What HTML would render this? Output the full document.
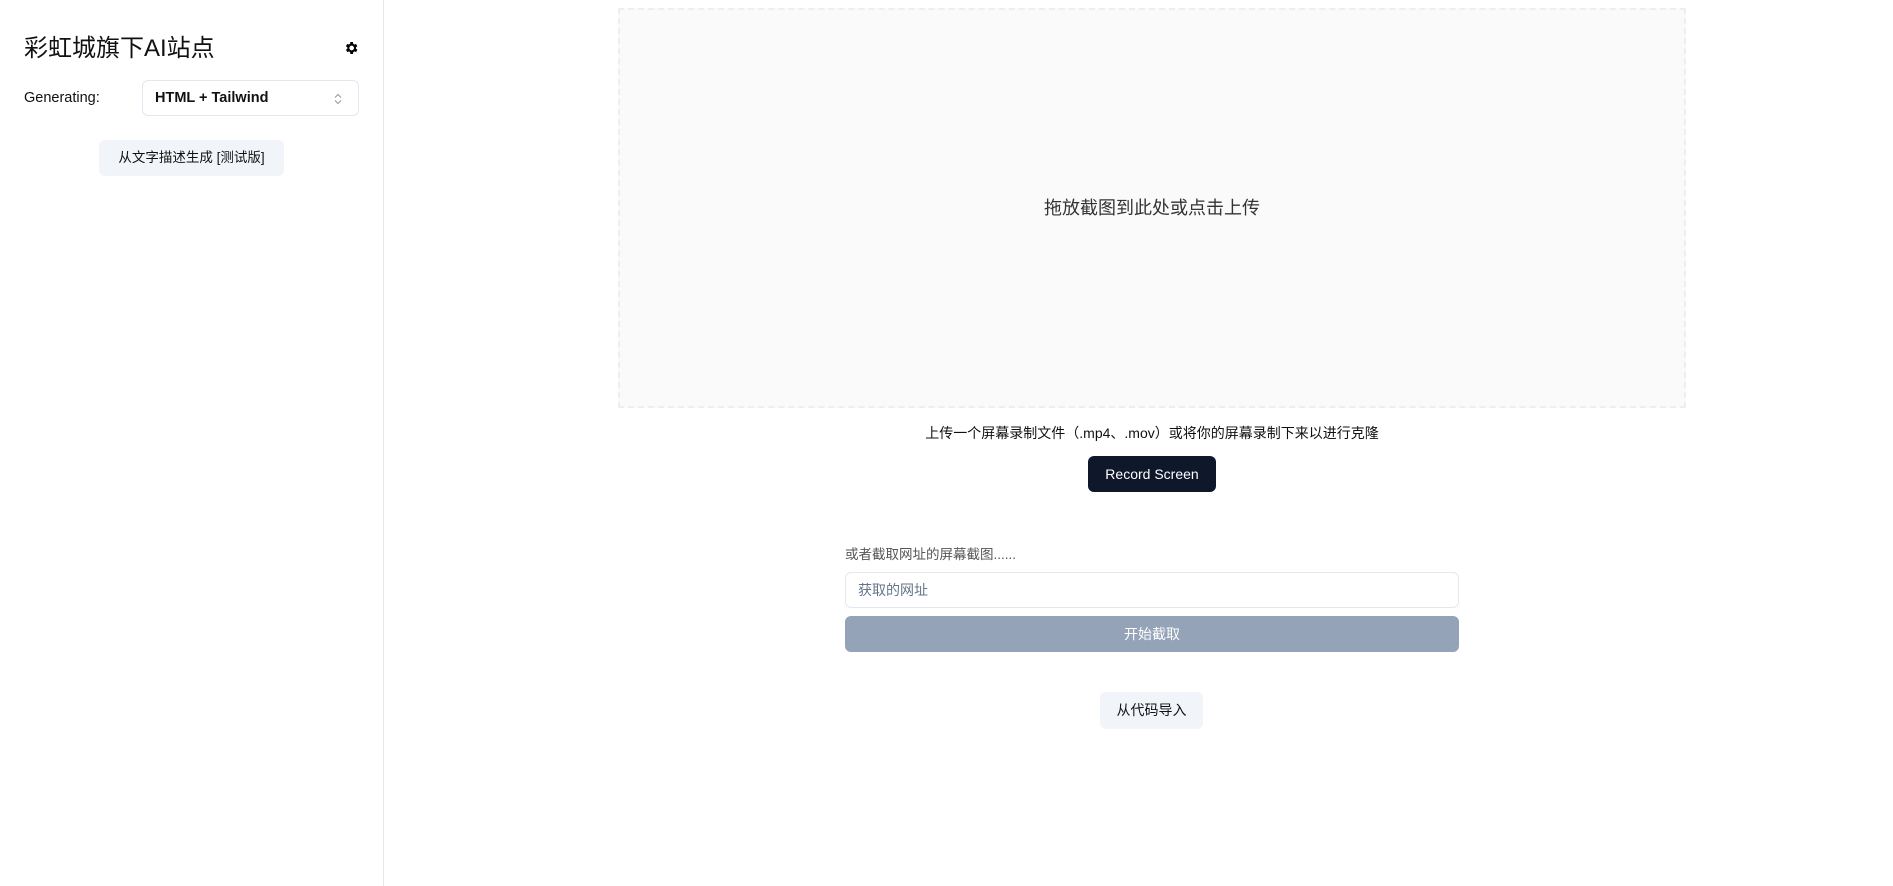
<!DOCTYPE html>
<html><head><meta charset="utf-8"><style>
*{box-sizing:border-box;margin:0;padding:0}
body{width:1893px;height:886px;background:#fff;font-family:"Liberation Sans","Noto Sans CJK SC",sans-serif;color:#111;position:relative;overflow:hidden}
.side{position:absolute;left:0;top:0;width:384px;height:886px;border-right:1px solid #e5e7eb}
.abs{position:absolute}
</style></head><body>
<div class="side">
  <div class="abs" style="left:24px;top:32px;font-size:24px;line-height:34px;color:#111">彩虹城旗下AI站点</div>
  <svg class="abs" style="left:343px;top:40px" width="16" height="16" viewBox="0 0 24 24"><path fill="#000" d="M19.4 13a7.5 7.5 0 0 0 0-2l2.1-1.6-2-3.5-2.5 1a7.6 7.6 0 0 0-1.7-1L15 3h-4l-.4 2.9a7.6 7.6 0 0 0-1.7 1l-2.5-1-2 3.5L6.6 11a7.5 7.5 0 0 0 0 2l-2.1 1.6 2 3.5 2.5-1a7.6 7.6 0 0 0 1.7 1L11 21h4l.4-2.9a7.6 7.6 0 0 0 1.7-1l2.5 1 2-3.5zM13 15.5a3.5 3.5 0 1 1 0-7 3.5 3.5 0 0 1 0 7z"/></svg>
  <div class="abs" style="left:24px;top:89px;font-size:14.5px;line-height:18px">Generating:</div>
  <div class="abs" style="left:142px;top:80px;width:217px;height:36px;border:1px solid #e2e8f0;border-radius:6px;font-size:14.5px;font-weight:bold;padding-left:12px;line-height:34px">HTML + Tailwind
    <svg class="abs" style="right:16px;top:12px" width="8" height="12" viewBox="0 0 8 12"><path d="M1 4.5L4 1.5 7 4.5M1 7.5L4 10.5 7 7.5" stroke="#999" fill="none" stroke-width="1"/></svg>
  </div>
  <div class="abs" style="left:99px;top:140px;width:185px;height:36px;background:#f1f5f9;border-radius:6px;font-size:13.5px;line-height:36px;text-align:center;color:#111">从文字描述生成 [测试版]</div>
</div>
<div class="abs" style="left:618px;top:8px;width:1068px;height:400px;background:#fafafa;border:2px dashed #eee;display:flex;align-items:center;justify-content:center;font-size:18px;color:#333;padding-bottom:2px">拖放截图到此处或点击上传</div>
<div class="abs" style="left:618px;top:424px;width:1068px;text-align:center;font-size:14px;line-height:18px;color:#111">上传一个屏幕录制文件（.mp4、.mov）或将你的屏幕录制下来以进行克隆</div>
<div class="abs" style="left:1088px;top:456px;width:128px;height:36px;background:#0f172a;color:#fff;border-radius:6px;font-size:14px;line-height:36px;text-align:center">Record Screen</div>
<div class="abs" style="left:845px;top:546px;font-size:13.5px;line-height:18px;color:#555">或者截取网址的屏幕截图......</div>
<div class="abs" style="left:845px;top:572px;width:614px;height:36px;border:1px solid #e2e8f0;border-radius:6px;font-size:14px;line-height:34px;padding-left:12px;color:#64748b">获取的网址</div>
<div class="abs" style="left:845px;top:616px;width:614px;height:36px;background:#94a3b8;border-radius:6px;color:#fff;font-size:14px;line-height:36px;text-align:center">开始截取</div>
<div class="abs" style="left:1100px;top:692px;width:103px;height:37px;background:#f1f5f9;border-radius:6px;font-size:14px;line-height:37px;text-align:center">从代码导入</div>
</body></html>
